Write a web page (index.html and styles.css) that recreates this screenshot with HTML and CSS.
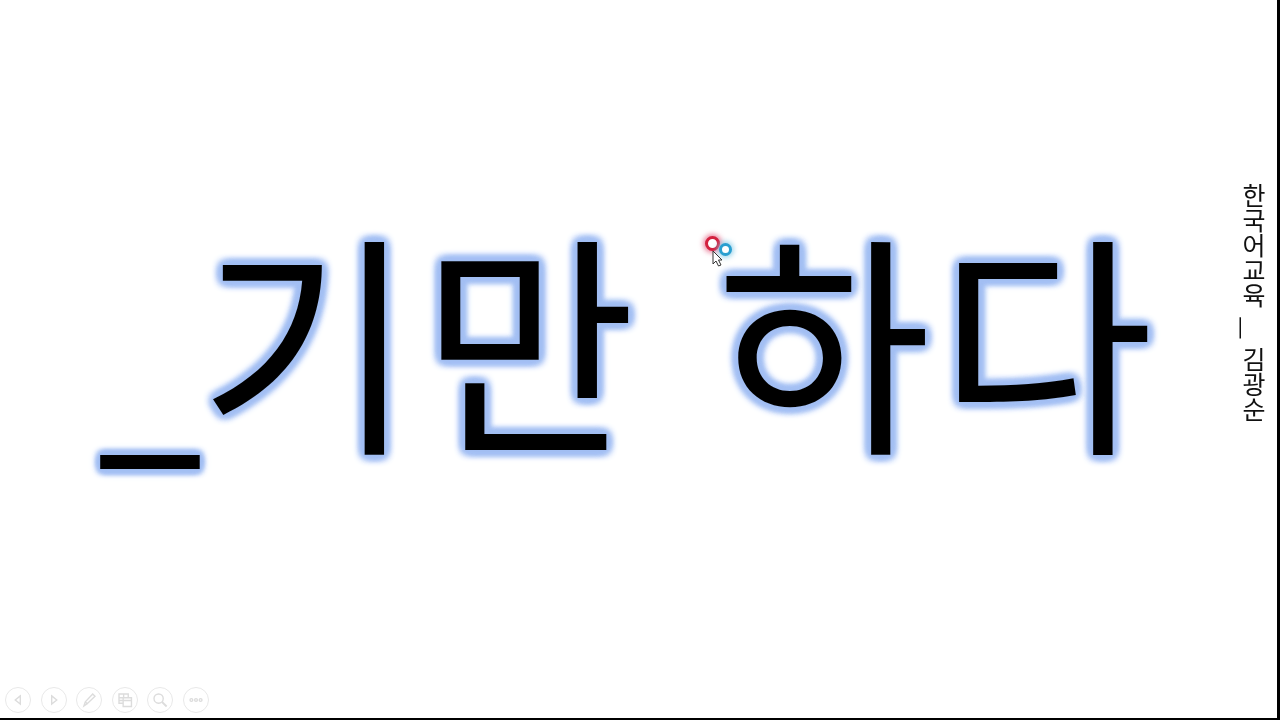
FILE: index.html
```html
<!DOCTYPE html>
<html lang="ko">
<head>
<meta charset="utf-8">
<title>기만하다</title>
<link rel="stylesheet" href="styles.css">
</head>
<body>
<main class="slide">
  <h1 class="word"><span class="bar">_</span>기만 하다</h1>
  <aside class="credit">한국어교육<span class="dash">_</span>김광순</aside>
  <div class="pointer">
    <span class="ring ring-red"></span>
    <span class="ring ring-blue"></span>
    <svg class="cursor" viewBox="0 0 12 18" width="12" height="18"><path d="M1 1v13l3-3 2.500 5 2.500-1-2.500-5H10z" fill="#fff" stroke="#333" stroke-width="1"/></svg>
  </div>
  <nav class="controls">
    <span class="ctl"><svg viewBox="0 0 26 26"><path d="M15.500 8.500 10 13l5.500 4.500z"/></svg></span>
    <span class="ctl"><svg viewBox="0 0 26 26"><path d="M10.500 8.500 16 13l-5.500 4.500z"/></svg></span>
    <span class="ctl"><svg viewBox="0 0 26 26"><path d="M7.500 19.500l1.500-4.500 8-8.500 2.500 2.500-8.500 8zM9 15l2.500 2.500"/></svg></span>
    <span class="ctl"><svg viewBox="0 0 26 26"><path d="M6.500 6.500h10v4h-10zM11.500 6.500v4M6.500 10.500v6h4.500M6.500 13.500h4.500M11 10.500h9v9.500h-9zM11 13.500h9"/></svg></span>
    <span class="ctl"><svg viewBox="0 0 26 26"><circle cx="11.500" cy="11.500" r="5"/><path d="M15.200 15.200l5 4.800" stroke-width="2"/></svg></span>
    <span class="ctl"><svg viewBox="0 0 26 26"><circle cx="8" cy="13" r="1.500"/><circle cx="13" cy="13" r="1.500"/><circle cx="18" cy="13" r="1.500"/></svg></span>
  </nav>
</main>
</body>
</html>
```
FILE: styles.css
```css
* { box-sizing: border-box; }
html, body { margin: 0; height: 100%; background: #fff; overflow: hidden; }
.slide {
  position: relative;
  width: 1280px;
  height: 720px;
  background: #fff;
  border-right: 3px solid #000;
  border-bottom: 2px solid #000;
  font-family: "Noto Sans CJK KR", sans-serif;
}
.word {
  margin: 0;
  position: absolute;
  left: 84px;
  top: 174px;
  font-size: 234px;
  font-weight: 400;
  line-height: 320px;
  letter-spacing: 7px;
  white-space: nowrap;
  color: #000;
  text-shadow:
    5px 0 6px #a3bff3, -5px 0 6px #a3bff3, 0 5px 6px #a3bff3, 0 -5px 6px #a3bff3,
    4px 4px 6px #a3bff3, -4px 4px 6px #a3bff3, 4px -4px 6px #a3bff3, -4px -4px 6px #a3bff3,
    0 0 4px #8fb2f0, 0 0 14px #c6d7f7;
  filter: blur(0.4px);
}
.bar {
  display: inline-block;
  transform: scaleX(0.8);
  margin-right: -23px;
}
.credit {
  position: absolute;
  left: 1239px;
  top: 183px;
  writing-mode: vertical-rl;
  font-size: 25px;
  line-height: 30px;
  white-space: nowrap;
  color: #111;
  filter: blur(0.4px);
}
.dash {
  display: inline-block;
  margin-inline: 12.500px 13px;
  transform: scaleY(1.6);
}
.pointer { position: absolute; left: 703px; top: 234px; width: 32px; height: 36px; }
.ring { position: absolute; border-radius: 50%; }
.ring-red { left: 2px; top: 2px; width: 15px; height: 15px; border: 3px solid #d3213f; background: #fff; box-shadow: 0 0 5px 2px rgba(226, 85, 122, 0.7); filter: blur(0.5px); }
.ring-blue { left: 16px; top: 9px; width: 13px; height: 13px; border: 3px solid #2a9fd0; background: #fff; box-shadow: 0 0 5px 2px rgba(124, 198, 230, 0.7); filter: blur(0.5px); }
.cursor { position: absolute; left: 9px; top: 16px; }
.controls { position: absolute; left: 5px; top: 687px; display: flex; gap: 9.500px; filter: blur(0.5px); }
.ctl { width: 26px; height: 26px; border: 1.500px solid #e8e8e8; border-radius: 50%; display: flex; }
.ctl svg { width: 100%; height: 100%; fill: none; stroke: #dcdcdc; stroke-width: 1.500; }
```
